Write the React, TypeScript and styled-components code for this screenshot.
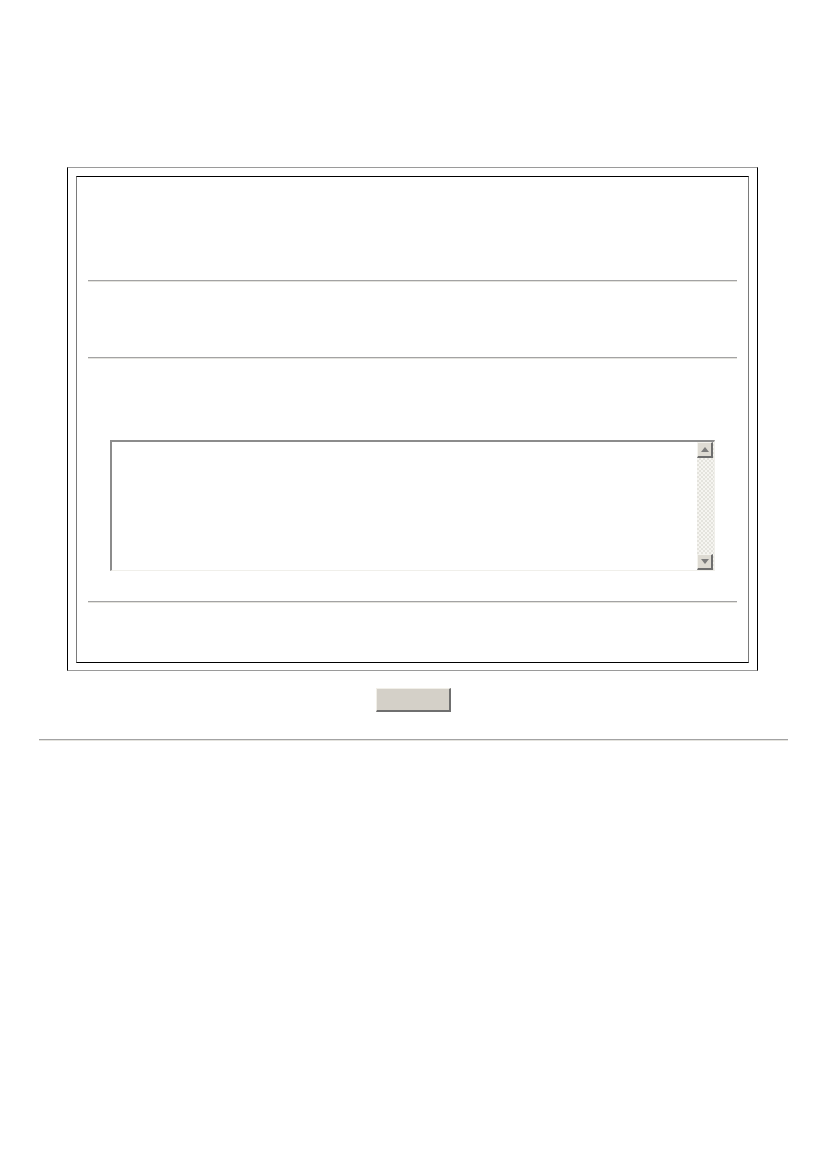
import styled, { createGlobalStyle } from 'styled-components'

const GlobalStyle = createGlobalStyle`
  html, body {
    margin: 0;
    padding: 0;
    background: #ffffff;
    font-family: "Liberation Sans", Arial, sans-serif;
    font-size: 13px;
  }
`

const Page = styled.div`
  padding-top: 167px;
  width: 826px;
  display: flex;
  flex-direction: column;
  align-items: center;
`

const OuterFrame = styled.div`
  box-sizing: border-box;
  width: 691px;
  margin-left: -1px;
  padding: 8px 8px 7px;
  border-style: solid;
  border-width: 1px;
  border-color: #9a9a9a #000000 #9a9a9a #000000;
`

const InnerFrame = styled.div`
  display: flex;
  flex-direction: column;
  padding: 0 11px;
  border-style: solid;
  border-width: 1px;
  border-color: #000000 #7a7a7a #000000 #7a7a7a;
`

const Section = styled.div<{ $height: number }>`
  height: ${props => props.$height}px;
`

const FieldSection = styled.div`
  display: flex;
  flex-direction: column;
  padding: 81px 22px 30px;
`

const Rule = styled.hr`
  margin: 0;
  height: 0;
  border: none;
  border-top: 1px solid #a3a3a3;
  border-bottom: 1px solid #e4e3de;
`

const TextBox = styled.div`
  display: flex;
  height: 131px;
  box-sizing: border-box;
  border-style: solid;
  border-width: 2px 1px 1px 2px;
  border-color: #8c8c8c #f0efea #f0efea #8c8c8c;
  background: #ffffff;
`

const TextInput = styled.textarea`
  flex: 1;
  border: none;
  outline: none;
  resize: none;
  padding: 2px;
  margin: 0;
  background: transparent;
  font-family: "Liberation Mono", "Courier New", monospace;
  font-size: 13px;
`

const ScrollBar = styled.div`
  width: 17px;
  display: flex;
  flex-direction: column;
  background: repeating-conic-gradient(#e4e3dd 0 25%, #f6f5f1 0 50%) 0 0 / 4px 4px;
`

const ScrollButton = styled.div`
  box-sizing: border-box;
  width: 16px;
  height: 16px;
  display: flex;
  align-items: center;
  justify-content: center;
  background: #dedbd3;
  border-style: solid;
  border-width: 1px 2px 2px 1px;
  border-color: #f4f3ee #6e6e6e #6e6e6e #f4f3ee;
`

const Track = styled.div`
  flex: 1;
`

const ButtonRow = styled.div`
  padding: 17px 0 27px;
  display: flex;
  justify-content: center;
`

const PushButton = styled.button`
  box-sizing: border-box;
  width: 75px;
  height: 24px;
  padding: 0;
  background: #d4d0c8;
  border-style: solid;
  border-width: 1px 2px 2px 1px;
  border-color: #f1efe8 #6f6f6f #6f6f6f #f1efe8;
  font-family: "Liberation Sans", Arial, sans-serif;
  font-size: 12px;
`

const PageRule = styled(Rule)`
  width: 749px;
`

function Arrow({ down }: { down?: boolean }) {
  return (
    <svg width="8" height="5" viewBox="0 0 8 5">
      <path d={down ? 'M0 0H8L4 5Z' : 'M4 0L8 5H0Z'} fill="#7c7c7c" />
    </svg>
  )
}

function App() {
  return (
    <>
      <GlobalStyle />
      <Page>
        <OuterFrame>
          <InnerFrame>
            <Section $height={103} />
            <Rule />
            <Section $height={75} />
            <Rule />
            <FieldSection>
              <TextBox>
                <TextInput aria-label="text" />
                <ScrollBar>
                  <ScrollButton>
                    <Arrow />
                  </ScrollButton>
                  <Track />
                  <ScrollButton>
                    <Arrow down />
                  </ScrollButton>
                </ScrollBar>
              </TextBox>
            </FieldSection>
            <Rule />
            <Section $height={59} />
          </InnerFrame>
        </OuterFrame>
        <ButtonRow>
          <PushButton type="button" />
        </ButtonRow>
        <PageRule />
      </Page>
    </>
  )
}

export default App
